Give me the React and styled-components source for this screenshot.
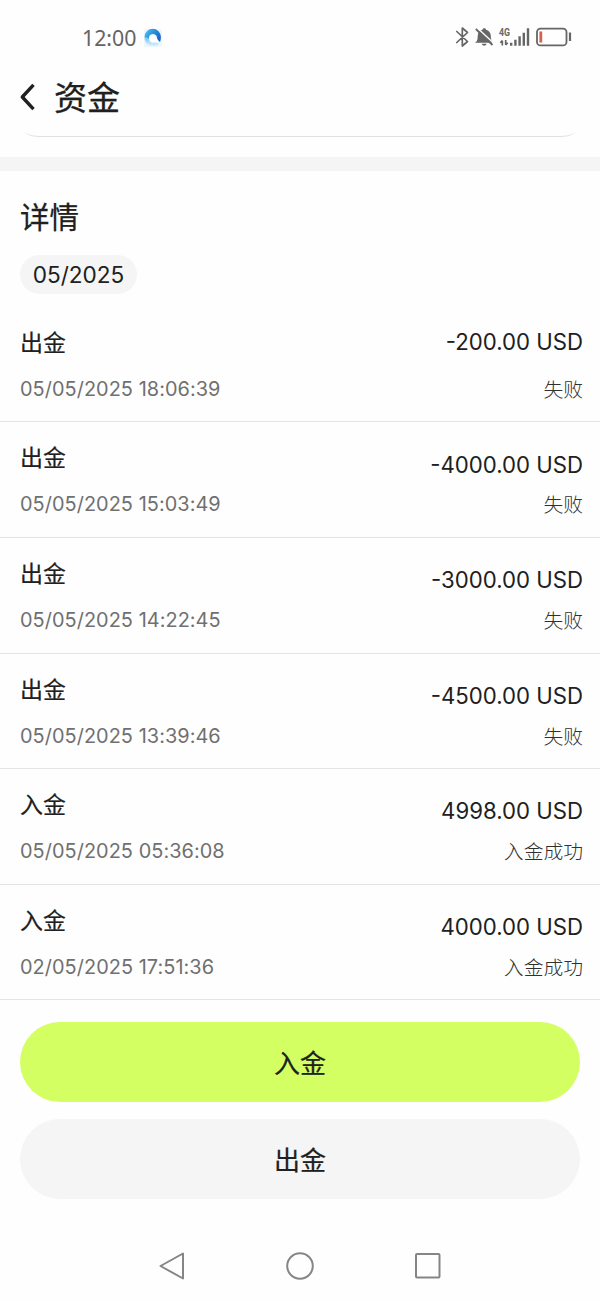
import React from "react";
import styled, { createGlobalStyle } from "styled-components";

const latin = `Inter, "Noto Sans CJK SC", sans-serif`;
const cjk = `"Noto Sans CJK SC", sans-serif`;

const GlobalStyle = createGlobalStyle`
  * { box-sizing: border-box; }
  body { margin: 0; background: #fefefe; color: #202020; font-family: ${latin}; }
  svg { display: block; flex: none; }
`;

const Screen = styled.div`
  width: 600px;
  height: 1300px;
  display: flex;
  flex-direction: column;
  overflow: hidden;
  background: #fefefe;
`;

const StatusBar = styled.div`
  height: 74px;
  flex: none;
  padding: 0 28px 0 82px;
  display: flex;
  align-items: center;
  justify-content: space-between;
`;

const ClockGroup = styled.div`
  display: flex;
  align-items: center;
  gap: 6.5px;
  padding-top: 1px;
`;

const Clock = styled.span`
  font: 400 21.3px/30px "Noto Sans", sans-serif;
  color: #646464;
`;

const Header = styled.header`
  height: 46px;
  flex: none;
  padding-left: 19px;
  display: flex;
  align-items: center;
  gap: 18px;
`;

const PageTitle = styled.h1`
  margin: 0;
  padding-bottom: 2px;
  font: 400 33px/44px ${cjk};
  -webkit-text-stroke: 0.3px #202020;
`;

const CardEdge = styled.div`
  height: 17px;
  flex: none;
  margin: 0 20px;
  display: flex;
  align-items: flex-end;
  overflow: hidden;

  &::after {
    content: "";
    flex: 1;
    height: 6px;
    margin: 0 5px;
    border-bottom: 1px solid #e0e0e0;
    border-radius: 0 0 14px 14px / 0 0 6px 6px;
  }
`;

const Divider = styled.div`
  height: 14px;
  flex: none;
  margin-top: 20px;
  background: #f5f5f5;
`;

const SectionTitle = styled.h2`
  margin: 24px 0 0 20px;
  flex: none;
  font: 400 29.5px/40px ${cjk};
  -webkit-text-stroke: 0.25px #202020;
`;

const MonthPill = styled.div`
  align-self: flex-start;
  flex: none;
  width: 117px;
  height: 39px;
  margin: 20px 0 0 20px;
  border-radius: 20px;
  background: #f5f5f5;
  display: flex;
  align-items: center;
  justify-content: center;
  font-size: 22.6px;
`;

const List = styled.div`
  flex: none;
  margin-top: 12.8px;
`;

const Row = styled.div`
  height: 115.6px;
  padding: 0 17px 0 20px;
  border-bottom: 1.4px solid #e4e4e4;
  display: flex;
  justify-content: space-between;
`;

const Column = styled.div`
  display: flex;
  flex-direction: column;
  align-items: ${(p) => (p.$end ? "flex-end" : "flex-start")};
  justify-content: space-between;
  padding: ${(p) => (p.$end ? (p.$low ? "27.3px" : "20.6px") : "19px")} 0 17.5px;
`;

const Kind = styled.span`
  font: 400 23px/30px ${cjk};
  -webkit-text-stroke: 0.2px #202020;
`;

const DateText = styled.span`
  font-size: 19.9px;
  line-height: 30px;
  letter-spacing: 0.05px;
  color: #707070;
`;

const Amount = styled.span`
  font-size: 22.2px;
  line-height: 30px;
`;

const State = styled.span`
  font: 300 19.8px/30px ${cjk};
  color: #303030;
`;

const Actions = styled.div`
  flex: none;
  padding: 21.6px 20px 0;
  display: flex;
  flex-direction: column;
  gap: 17px;
`;

const ActionButton = styled.button`
  height: 80px;
  border: 0;
  padding: 0;
  border-radius: 40px;
  background: ${(p) => (p.$primary ? "#d3ff62" : "#f5f5f5")};
  color: #202020;
  font: 400 26px/40px ${cjk};
  -webkit-text-stroke: 0.22px #202020;
`;

const NavBar = styled.nav`
  flex: none;
  margin-top: 53px;
  height: 28px;
  padding: 0 159px;
  display: flex;
  align-items: center;
  justify-content: space-between;
`;

const records = [
  ["出金", "05/05/2025 18:06:39", "-200.00 USD", "失败"],
  ["出金", "05/05/2025 15:03:49", "-4000.00 USD", "失败"],
  ["出金", "05/05/2025 14:22:45", "-3000.00 USD", "失败"],
  ["出金", "05/05/2025 13:39:46", "-4500.00 USD", "失败"],
  ["入金", "05/05/2025 05:36:08", "4998.00 USD", "入金成功"],
  ["入金", "02/05/2025 17:51:36", "4000.00 USD", "入金成功"],
];

function BrowserLogo() {
  return (
    <svg width="20" height="20" viewBox="0 0 20 20">
      <defs>
        <linearGradient id="ring" x1="0" y1="0.2" x2="1" y2="0.7">
          <stop offset="0" stopColor="#58b9ef" />
          <stop offset="0.5" stopColor="#2590de" />
          <stop offset="1" stopColor="#1764c8" />
        </linearGradient>
        <linearGradient id="tail" x1="0" y1="0" x2="0" y2="1">
          <stop offset="0" stopColor="#72c6f3" />
          <stop offset="1" stopColor="#d9effc" />
        </linearGradient>
      </defs>
      <rect x="1" y="1" width="18" height="18" rx="2" fill="#edf6fc" />
      <path d="M1.5 9C1.500 14.500 5 18 10 18c3 0 5-.8 6.500-2.300L10 14 6 10Z" fill="url(#tail)" />
      <path d="M1.500 9a8.200 8.200 0 0 1 16.400 0c0 1.800-.2 3.200-.9 5l-3-2.500C13.600 8 12 6.500 10 6.500S6 8.200 6 10.500Z" fill="url(#ring)" />
      <path d="M6 10.500a4 4 0 0 1 8-.3l1.800 3.300c-1.600 1.300-3 1-4.300 1-2.500.6-5.500-.6-5.500-4Z" fill="#fff" />
    </svg>
  );
}

function SystemIcons() {
  return (
    <svg width="118" height="24" viewBox="454 25 118 24" fill="none" stroke="#666" strokeWidth="1.700">
      <path d="M456.800 31.500 467.500 41.500 462.300 46V28l5.200 4.500L456.800 42.500" strokeLinejoin="round" strokeLinecap="round" />
      <path d="M475 42.800c2.500-1.500 2.700-3.800 2.700-6.800 0-3.500 2-5.800 4.800-6.300.3-1.900 3.200-1.900 3.500 0 3 .6 4.800 3 4.800 6.300 0 3 .4 5 2.700 6.800Z" fill="#666" stroke="none" />
      <path d="M481.800 43.800h4.800c-.5 2.500-4.300 2.500-4.800 0Z" fill="#666" stroke="none" />
      <path d="M476.800 27.500 494 43.500" stroke="#fefefe" strokeWidth="1.500" />
      <path d="M475.800 29 492.500 45" strokeWidth="1.800" />
      <text x="499" y="36" fill="#666" stroke="none" fontFamily="Roboto, sans-serif" fontSize="10.500" fontWeight="700" textLength="11" lengthAdjust="spacingAndGlyphs">4G</text>
      <path d="M502.300 45.500v-5M500.300 42.800l2-2.200M505.700 40v5M507.700 42.700l-2 2.200" strokeWidth="1.700" />
      <path d="M511.200 45.700v-3M515.400 45.700v-6M519.600 45.700v-9.500M523.800 45.700v-13M528 45.700V28.300" strokeWidth="2.400" />
      <rect x="537" y="28.600" width="29.500" height="16.800" rx="3.500" strokeWidth="1.800" />
      <path d="M540.800 31.500v11" stroke="#d4604e" strokeWidth="2.800" />
      <path d="M570 32.500v8.500" strokeWidth="2.200" />
    </svg>
  );
}

export default function App() {
  return (
    <Screen>
      <GlobalStyle />
      <StatusBar>
        <ClockGroup>
          <Clock>12:00</Clock>
          <BrowserLogo />
        </ClockGroup>
        <SystemIcons />
      </StatusBar>
      <Header>
        <svg width="17" height="28" viewBox="0 0 17 28" fill="none" stroke="#202020" strokeWidth="3.400">
          <path d="M14.500 1.800 3.300 14 14.500 26.200" strokeLinejoin="round" />
        </svg>
        <PageTitle>资金</PageTitle>
      </Header>
      <CardEdge />
      <Divider />
      <SectionTitle>详情</SectionTitle>
      <MonthPill>05/2025</MonthPill>
      <List>
        {records.map(([kind, date, amount, state], i) => (
          <Row key={date}>
            <Column>
              <Kind>{kind}</Kind>
              <DateText>{date}</DateText>
            </Column>
            <Column $end $low={i > 0}>
              <Amount>{amount}</Amount>
              <State>{state}</State>
            </Column>
          </Row>
        ))}
      </List>
      <Actions>
        <ActionButton $primary>入金</ActionButton>
        <ActionButton>出金</ActionButton>
      </Actions>
      <NavBar>
        <svg width="26" height="28" viewBox="0 0 26 28" fill="none" stroke="#858585" strokeWidth="2" strokeLinejoin="round">
          <path d="M24 1.500v25L1.500 14Z" />
        </svg>
        <svg width="28" height="28" viewBox="0 0 28 28" fill="none" stroke="#858585" strokeWidth="2">
          <circle cx="14" cy="14" r="12.800" />
        </svg>
        <svg width="26" height="26" viewBox="0 0 26 26" fill="none" stroke="#858585" strokeWidth="2">
          <rect x="1" y="1" width="23.500" height="23.500" rx="1" />
        </svg>
      </NavBar>
    </Screen>
  );
}
